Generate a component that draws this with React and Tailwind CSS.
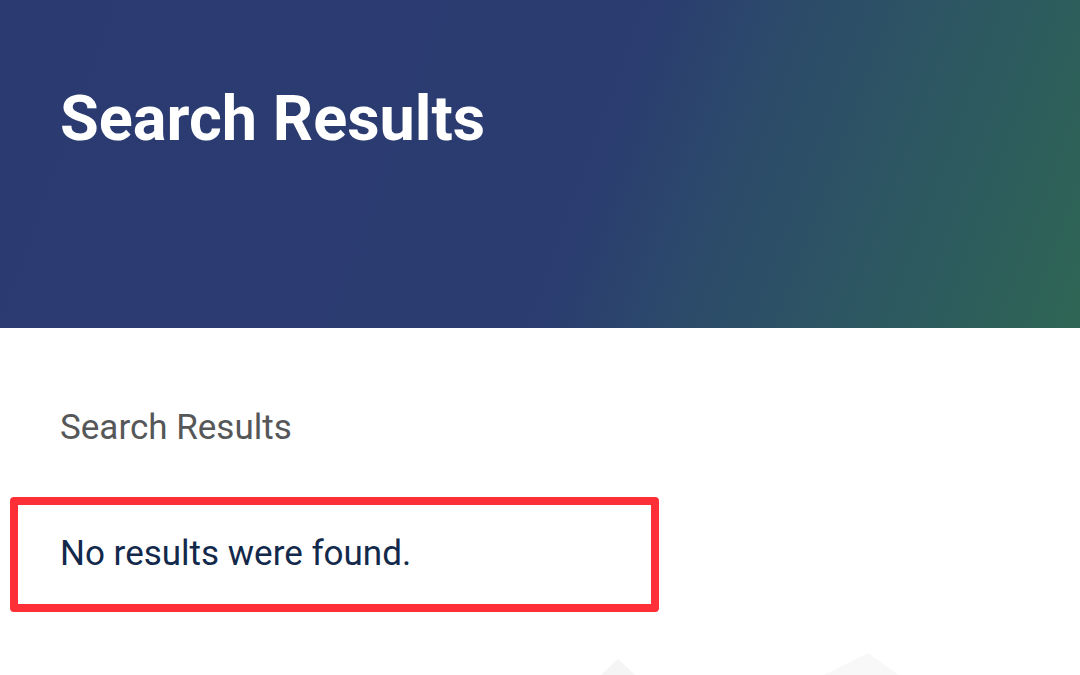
export default function App() {
  return (
    <div className="w-[1080px] h-[675px] overflow-hidden bg-white font-['Roboto',sans-serif]">
      <header className="h-[328px] px-[60px] pt-[82px] bg-[linear-gradient(110deg,#2b3b71_0%,#2b3c71_54%,#2c4c69_68%,#2d5960_84%,#2e6654_100%)]">
        <h1 className="text-[63px] leading-[74px] font-bold text-white">Search Results</h1>
      </header>
      <main className="relative pt-[77px]">
        <h2 className="px-[60px] text-[35px] leading-[46px] text-[#555759]">Search Results</h2>
        <div className="mt-[46px] ml-[10px] w-[649px] h-[115px] border-[8px] border-[#fe2f37] rounded-[4px] pl-[42px] flex items-center">
          <p className="text-[35px] leading-none text-[#13294b] pb-[2px]">No results were found.</p>
        </div>
        <svg className="absolute left-0 top-[318px]" width="1080" height="30" viewBox="0 0 1080 30">
          <polygon points="600,30 618,13 636,30" fill="#f5f5f5" />
          <polygon points="822,30 868,7 900,30" fill="#f8f8f8" />
        </svg>
      </main>
    </div>
  );
}
